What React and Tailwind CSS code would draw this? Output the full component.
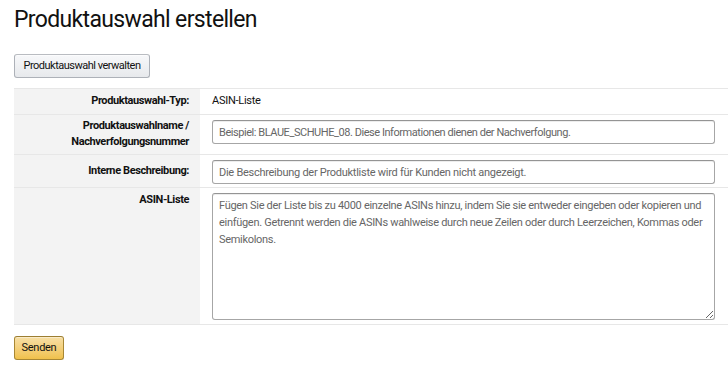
import React from "react";

const font = { fontFamily: "Roboto, 'Liberation Sans', Arial, sans-serif" };

function Label({ children, className = "" }) {
  return (
    <div className={"w-[186px] shrink-0 bg-[#f3f3f3] text-right pr-[11px] font-bold text-[#111] text-[11px] leading-[16px] tracking-[-0.4px] " + className}>
      {children}
    </div>
  );
}

const inputBase =
  "block w-full h-[24px] rounded-[3px] border border-[#a6a6a6] border-t-[#949494] px-[6px] text-[11px] text-[#111] placeholder:text-[#666] shadow-[inset_0_1px_0_rgba(0,0,0,0.07)] outline-none";

export default function App() {
  return (
    <div className="bg-white w-[728px] h-[366px] pl-[14px] text-[#111]" style={font}>
      <h1 className="text-[23px] leading-[28px] font-normal pt-[6px] text-[#111] tracking-[-0.65px]">Produktauswahl erstellen</h1>
      <button className="mt-[20px] h-[24px] w-[136px] rounded-[3px] border border-[#adb1b8] border-t-[#b9bcc1] bg-gradient-to-b from-[#f7f8fa] to-[#e7e9ec] text-[11px] tracking-[-0.5px] text-[#111] shadow-[inset_0_1px_0_rgba(255,255,255,0.6)]">
        Produktauswahl verwalten
      </button>
      <div className="mt-[10px] border-b border-[#e7e7e7]">
        <div className="flex border-t border-[#e7e7e7]">
          <Label className="pt-[4px] pb-[5px]">Produktauswahl-Typ:</Label>
          <div className="flex-1 pl-[12px] pt-[4px] pb-[5px] text-[11px] leading-[16px] tracking-[-0.27px] text-[#111]">ASIN-Liste</div>
        </div>
        <div className="flex border-t border-[#e7e7e7]">
          <Label className="pt-[3px] pb-[4px]">
            Produktauswahlname /<br />Nachverfolgungsnummer
          </Label>
          <div className="flex-1 pl-[12px] pr-[13px] pt-[5px]">
            <input
              readOnly
              placeholder="Beispiel: BLAUE_SCHUHE_08. Diese Informationen dienen der Nachverfolgung."
              className={inputBase + " tracking-[-0.45px]"}
              style={font}
            />
          </div>
        </div>
        <div className="flex border-t border-[#e7e7e7]">
          <Label className="pt-[8px] pb-[8px]">Interne Beschreibung:</Label>
          <div className="flex-1 pl-[12px] pr-[13px] pt-[5px] pb-[3px]">
            <input
              readOnly
              placeholder="Die Beschreibung der Produktliste wird für Kunden nicht angezeigt."
              className={inputBase + " tracking-[-0.27px]"}
              style={font}
            />
          </div>
        </div>
        <div className="flex border-t border-[#e7e7e7]">
          <Label className="pt-[4px]">ASIN-Liste</Label>
          <div className="flex-1 pl-[12px] pr-[13px] pt-[5px] pb-[4px]">
            <textarea
              readOnly
              placeholder="Fügen Sie der Liste bis zu 4000 einzelne ASINs hinzu, indem Sie sie entweder eingeben oder kopieren und einfügen. Getrennt werden die ASINs wahlweise durch neue Zeilen oder durch Leerzeichen, Kommas oder Semikolons."
              className="block w-full h-[127px] rounded-[3px] border border-[#a6a6a6] border-t-[#949494] px-[6px] py-[3px] text-[11px] leading-[17px] tracking-[-0.3px] text-[#111] placeholder:text-[#666] shadow-[inset_0_1px_0_rgba(0,0,0,0.07)] outline-none resize"
              style={font}
            />
          </div>
        </div>
      </div>
      <button className="mt-[11px] h-[24px] w-[50px] rounded-[3px] border border-[#a88734] border-t-[#9c7e31] bg-gradient-to-b from-[#f7dfa5] to-[#f0c14b] text-[11px] tracking-[-0.3px] text-[#111] shadow-[inset_0_1px_0_rgba(255,255,255,0.4)]">
        Senden
      </button>
    </div>
  );
}
